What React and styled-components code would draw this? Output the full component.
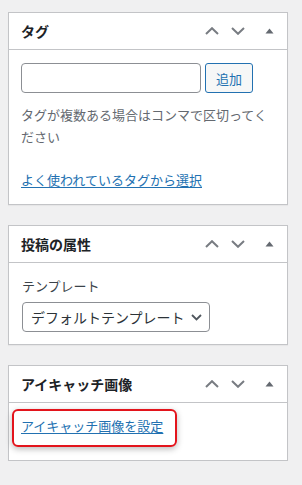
import React from "react";
import styled, { createGlobalStyle } from "styled-components";

const Global = createGlobalStyle`
  html, body { margin: 0; padding: 0; background: #f0f0f1; }
  body {
    font-family: "Noto Sans CJK JP", "Noto Sans", sans-serif;
    font-size: 13px;
    color: #3c434a;
  }
`;

const Page = styled.div`
  padding: 12px 14px 0 8px;
  display: flex;
  flex-direction: column;
  gap: 20px;
`;

const Panel = styled.section`
  width: 280px;
  box-sizing: border-box;
  background: #fff;
  border: 1px solid #c3c4c7;
  box-shadow: 0 1px 1px rgba(0, 0, 0, 0.04);
`;

const Header = styled.div`
  display: flex;
  align-items: center;
  height: 36px;
  border-bottom: 1px solid #c3c4c7;
`;

const Title = styled.h2`
  flex: 1;
  margin: 0;
  padding: 0 12px;
  font-size: 14px;
  font-weight: 600;
  line-height: 36px;
  color: #1d2327;
`;

const HBtn = styled.button`
  width: ${(p) => (p.$wide ? 36 : 26)}px;
  height: 36px;
  padding: 0;
  border: 0;
  background: none;
  display: flex;
  align-items: center;
  justify-content: center;
  color: ${(p) => (p.$wide ? "#646970" : "#787c82")};
`;

const Body = styled.div`
  padding: ${(p) => p.$pad};
`;

const Row = styled.div`
  display: flex;
  gap: 4px;
`;

const Input = styled.input`
  width: 180px;
  height: 30px;
  box-sizing: border-box;
  border: 1px solid #8c8f94;
  border-radius: 4px;
  margin: 0;
`;

const Button = styled.button`
  width: 48px;
  height: 30px;
  box-sizing: border-box;
  border: 1px solid #2271b1;
  border-radius: 3px;
  background: #f6f7f7;
  color: #2271b1;
  font-family: inherit;
  font-size: 13px;
  padding: 0;
`;

const Help = styled.p`
  margin: 11px 0 0;
  line-height: 22px;
  color: #646970;
`;

const LinkP = styled.p`
  margin: ${(p) => p.$m || "0"};
  line-height: 22px;
`;

const Link = styled.a`
  color: #2271b1;
  text-decoration: underline;
  text-underline-offset: 2px;
  position: relative;
  display: inline-block;
  ${(p) =>
    p.$marked &&
    `
    &::after {
      content: "";
      position: absolute;
      left: -9px;
      top: -6px;
      width: 165px;
      height: 38px;
      box-sizing: border-box;
      border: 2px solid #e3141c;
      border-radius: 6px;
      box-shadow: 0 2px 6px rgba(0,0,0,0.28);
      pointer-events: none;
    }
  `}
`;

const Label = styled.div`
  line-height: 22px;
  color: #3c434a;
  font-size: 13px;
`;

const SelectWrap = styled.div`
  position: relative;
  width: 188px;
  margin-top: 5px;
`;

const Select = styled.select`
  appearance: none;
  -webkit-appearance: none;
  width: 188px;
  height: 30px;
  box-sizing: border-box;
  border: 1px solid #8c8f94;
  border-radius: 4px;
  background: #fff;
  padding: 0 24px 0 8px;
  font-family: inherit;
  font-size: 14px;
  color: #2c3338;
  margin: 0;
`;

const SelectArrow = styled.svg`
  position: absolute;
  right: 8px;
  top: 12px;
  pointer-events: none;
`;

const Up = () => (
  <svg width="14" height="8" viewBox="0 0 14 8">
    <path d="M1 7 L7 1.2 L13 7" fill="none" stroke="currentColor" strokeWidth="2" />
  </svg>
);
const Down = () => (
  <svg width="14" height="8" viewBox="0 0 14 8">
    <path d="M1 1 L7 6.8 L13 1" fill="none" stroke="currentColor" strokeWidth="2" />
  </svg>
);
const Tri = () => (
  <svg width="9" height="6" viewBox="0 0 9 6">
    <polygon points="0.5,5.5 4.5,0.5 8.5,5.5" fill="currentColor" />
  </svg>
);

const PanelHeader = ({ title }) => (
  <Header>
    <Title>{title}</Title>
    <HBtn aria-label="上へ移動"><Up /></HBtn>
    <HBtn aria-label="下へ移動"><Down /></HBtn>
    <HBtn $wide aria-label="パネルを切り替え"><Tri /></HBtn>
  </Header>
);

export default function App() {
  return (
    <>
      <Global />
      <Page>
        <Panel>
          <PanelHeader title="タグ" />
          <Body $pad="13px 12px 13px 12px">
            <Row>
              <Input type="text" />
              <Button>追加</Button>
            </Row>
            <Help>タグが複数ある場合はコンマで区切ってください</Help>
            <LinkP $m="21px 0 0">
              <Link href="#">よく使われているタグから選択</Link>
            </LinkP>
          </Body>
        </Panel>

        <Panel>
          <PanelHeader title="投稿の属性" />
          <Body $pad="12px 12px 12px 13px">
            <Label>テンプレート</Label>
            <SelectWrap>
              <Select defaultValue="default">
                <option value="default">デフォルトテンプレート</option>
              </Select>
              <SelectArrow width="11" height="7" viewBox="0 0 11 7">
                <path d="M1 1 L5.5 5.5 L10 1" fill="none" stroke="#50575e" strokeWidth="1.8" />
              </SelectArrow>
            </SelectWrap>
          </Body>
        </Panel>

        <Panel>
          <PanelHeader title="アイキャッチ画像" />
          <Body $pad="12px 12px 23px 12px">
            <LinkP>
              <Link href="#" $marked>アイキャッチ画像を設定</Link>
            </LinkP>
          </Body>
        </Panel>
      </Page>
    </>
  );
}
